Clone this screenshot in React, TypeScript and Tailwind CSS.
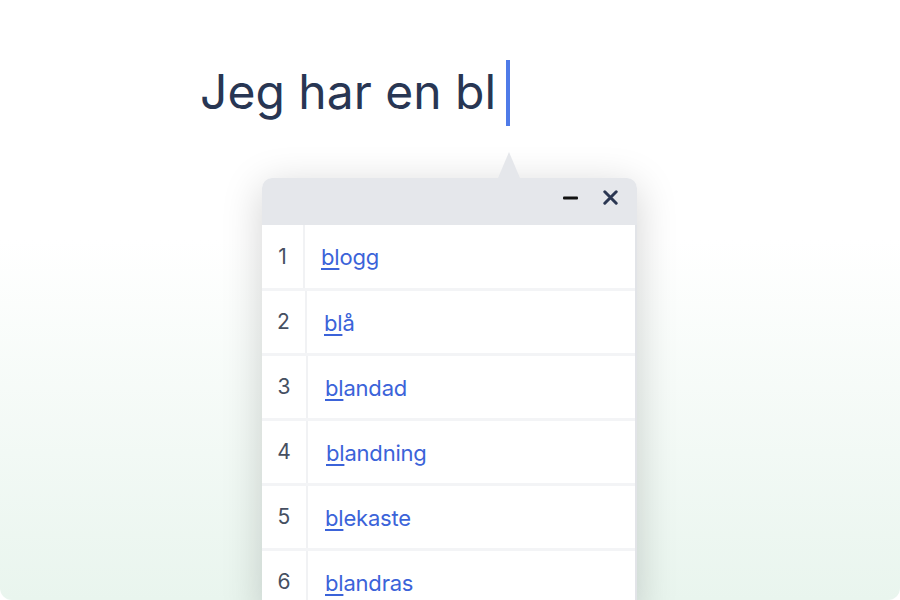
import React from "react";

const rows = [
  { n: "1", rest: "ogg", col: "w-[43px]", pl: "pl-[16px]" },
  { n: "2", rest: "å", col: "w-[45px]", pl: "pl-[17px]" },
  { n: "3", rest: "andad", col: "w-[46px]", pl: "pl-[17px]" },
  { n: "4", rest: "andning", col: "w-[46px]", pl: "pl-[18px]" },
  { n: "5", rest: "ekaste", col: "w-[46px]", pl: "pl-[17px]" },
  { n: "6", rest: "andras", col: "w-[46px]", pl: "pl-[17px]" },
];

export default function App() {
  return (
    <div
      className="w-[900px] h-[600px] overflow-hidden rounded-[12px] bg-gradient-to-b from-white from-[40%] to-[#e9f5ee]"
      style={{ fontFamily: "Inter, 'Noto Sans', sans-serif" }}
    >
      <div className="flex items-center pl-[200px] pt-[60px] h-[126px]">
        <span className="text-[48px] leading-[48px] text-[#283653] mt-[-2px]">Jeg har en bl</span>
        <span className="ml-[10px] w-[4px] h-[66px] bg-[#4f7be8] self-start"></span>
      </div>
      <div className="relative ml-[262px] mt-[52px] w-[375px] shadow-[0_8px_40px_rgba(0,0,0,0.18)] rounded-t-[10px]">
        <div className="absolute left-[236px] top-[-26px] w-0 h-0 border-l-[11px] border-r-[11px] border-b-[26px] border-l-transparent border-r-transparent border-b-[#e5e7eb]"></div>
        <div className="h-[47px] bg-[#e5e7eb] rounded-t-[10px] flex items-center justify-end pr-[19px] pb-[9px] gap-[25px]">
          <svg width="15" height="6" viewBox="0 0 15 6" className="mt-[1px]">
            <rect x="0" y="1.5" width="15" height="3" rx="1" fill="#111111" />
          </svg>
          <svg width="15" height="15" viewBox="0 0 15 15">
            <path d="M1.8 1.8 L13.2 13.2 M13.2 1.8 L1.8 13.2" stroke="#2b3752" strokeWidth="3" strokeLinecap="round" />
          </svg>
        </div>
        <div className="flex flex-col gap-[3px] bg-[#f3f4f6] border-r-[2px] border-[#e2e4e8]">
          {rows.map((r, i) => (
            <div key={r.n} className={`flex bg-white ${i === 0 ? "h-[63px]" : "h-[62px]"}`}>
              <div className={`${r.col} flex items-center justify-center text-[21px] text-[#464f61] border-r-[2px] border-[#f1f2f4]`}>
                {r.n}
              </div>
              <div className={`flex items-center ${r.pl} text-[22px] tracking-[-0.2px] text-[#3b63d9] pt-[2px]`}>
                <span className="underline decoration-[2px] underline-offset-[3px]">bl</span>
                <span>{r.rest}</span>
              </div>
            </div>
          ))}
        </div>
      </div>
    </div>
  );
}
